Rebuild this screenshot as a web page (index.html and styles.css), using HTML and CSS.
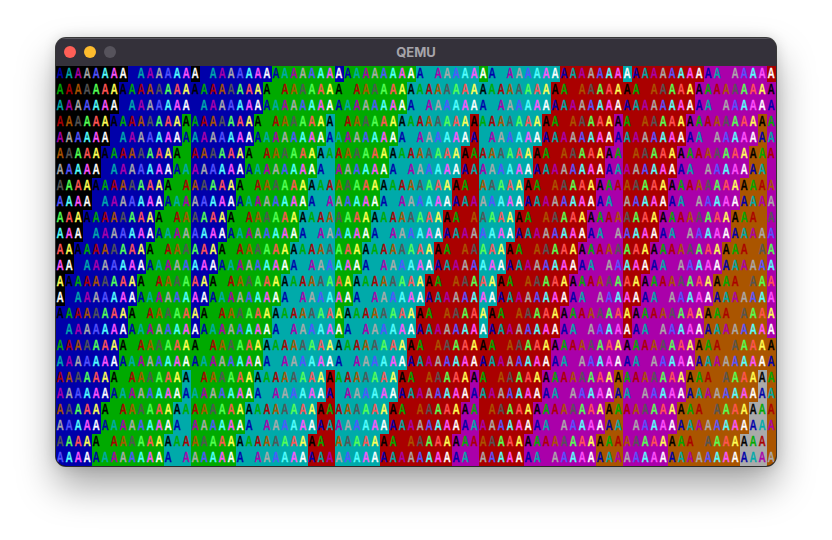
FILE: index.html
```html
<!DOCTYPE html>
<html lang="en">
<head>
<meta charset="utf-8">
<title>QEMU</title>
<link rel="stylesheet" href="styles.css">
</head>
<body>
<main class="window">
  <header class="titlebar">
    <div class="lights">
      <span class="light light-close"></span>
      <span class="light light-min"></span>
      <span class="light light-zoom"></span>
    </div>
    <h1 class="title">QEMU</h1>
  </header>
  <div class="screen" id="screen"></div>
</main>
<script src="screen.js"></script>
</body>
</html>
```
FILE: styles.css
```css
* { box-sizing: border-box; }
html, body { margin: 0; height: 100%; background: #fff; overflow: hidden; }
body { display: flex; justify-content: center; align-items: flex-start; padding-top: 38px; }

.window {
  width: 720px;
  border-radius: 10px;
  overflow: hidden;
  background: #34313a;
  box-shadow: 0 0 0 1px rgba(0,0,0,.75), 0 20px 38px rgba(0,0,0,.36), 0 0 14px rgba(0,0,0,.14);
}
.titlebar {
  height: 28px;
  display: grid;
  grid-template-columns: 1fr auto 1fr;
  align-items: center;
  padding: 0 8px;
  background: #34313a;
  box-shadow: inset 0 1px 0 #5a5860;
}
.lights { display: flex; gap: 8px; }
.light { width: 12px; height: 12px; border-radius: 50%; }
.light-close { background: #ff5f57; }
.light-min { background: #febc2e; }
.light-zoom { background: #56535c; }
.title {
  margin: 0;
  font: 700 13px/28px "Inter", "Liberation Sans", sans-serif;
  color: #a6a4aa;
}

.screen {
  display: grid;
  grid-template-columns: repeat(80, 9px);
  grid-auto-rows: 16px;
  height: 400px;
  background: #000;
}
.cell {
  display: block;
  overflow: hidden;
  text-align: center;
  font: 400 14px/15px "DejaVu Sans Mono", monospace;
}
.glyph {
  display: block;
  transform: translateX(-.5px) scaleX(.8);
  -webkit-text-stroke: .5px currentColor;
}

.f0 { color: #000000; } .f1 { color: #0000aa; } .f2 { color: #00aa00; } .f3 { color: #00aaaa; }
.f4 { color: #aa0000; } .f5 { color: #aa00aa; } .f6 { color: #aa5500; } .f7 { color: #aaaaaa; }
.f8 { color: #555555; } .f9 { color: #5555ff; } .f10 { color: #55ff55; } .f11 { color: #55ffff; }
.f12 { color: #ff5555; } .f13 { color: #ff55ff; } .f14 { color: #ffff55; } .f15 { color: #ffffff; }

.b0 { background: #000000; } .b1 { background: #0000aa; } .b2 { background: #00aa00; } .b3 { background: #00aaaa; }
.b4 { background: #aa0000; } .b5 { background: #aa00aa; } .b6 { background: #aa5500; } .b7 { background: #aaaaaa; }
```
FILE: screen.js
```js
// VGA text mode: 80x25 cells, each an "A" with an attribute byte.
var screen = document.getElementById('screen');
var frag = document.createDocumentFragment();
for (var r = 0; r < 25; r++) {
  for (var c = 0; c < 80; c++) {
    var attr = r + 1 + 2 * c - 16 * Math.floor((c + 1) / 16);
    var cell = document.createElement('span');
    cell.className = 'cell f' + (attr & 15) + ' b' + ((attr >> 4) & 7);
    var glyph = document.createElement('span');
    glyph.className = 'glyph';
    glyph.textContent = 'A';
    cell.appendChild(glyph);
    frag.appendChild(cell);
  }
}
screen.appendChild(frag);
```
